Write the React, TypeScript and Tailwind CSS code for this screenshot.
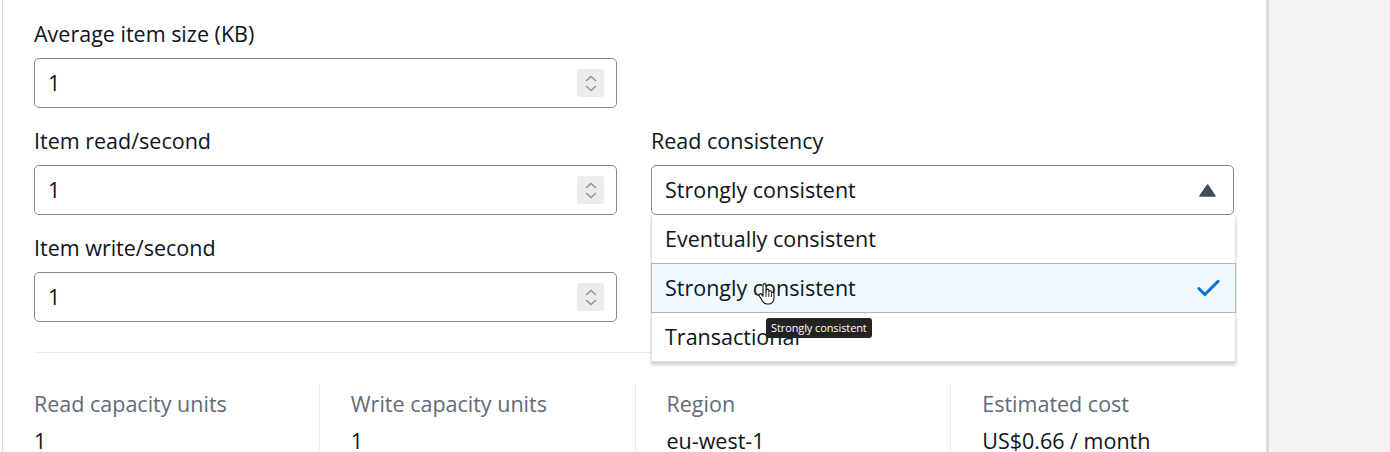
import { Check } from "lucide-react";

const font = { fontFamily: '"Open Sans", "Noto Sans", sans-serif' };

function Spinner() {
  return (
    <div className="flex h-[28px] w-[27px] flex-col items-center justify-center gap-[3px] rounded-[3px] bg-[#ececec]">
      <svg width="12" height="7" viewBox="0 0 12 7" fill="none">
        <path d="M1 6 L6 1.5 L11 6" stroke="#8d9399" strokeWidth="1.4" />
      </svg>
      <svg width="12" height="7" viewBox="0 0 12 7" fill="none">
        <path d="M1 1 L6 5.5 L11 1" stroke="#8d9399" strokeWidth="1.4" />
      </svg>
    </div>
  );
}

function NumberField({ label, value }: { label: string; value: string }) {
  return (
    <div className="flex flex-col">
      <label className="mb-[12px] text-[21.5px] leading-[24px] text-[#0f141a]">{label}</label>
      <div className="flex h-[50px] items-center justify-between rounded-[5px] border border-[#7d8998] bg-white pl-[13px] pr-[12px]">
        <span className="text-[21.5px] text-[#0f141a]">{value}</span>
        <Spinner />
      </div>
    </div>
  );
}

const options = ["Eventually consistent", "Strongly consistent", "Transactional"];

function PointerHand() {
  return (
    <svg width="18" height="22" viewBox="0 0 18 22" className="absolute left-[758px] top-[283px]">
      <path
        d="M5 2.2c0-1 .7-1.6 1.5-1.6S8 1.2 8 2.2V9l.2-1.6c.1-.8.7-1.3 1.4-1.3s1.3.6 1.3 1.4v1.2c.2-.6.7-1 1.3-1s1.3.5 1.3 1.3v1c.2-.5.7-.8 1.2-.8.7 0 1.3.6 1.3 1.4v4.5c0 3.3-2.3 5.9-5.5 5.9H9c-2 0-3.3-.9-4.4-2.6L1.3 13c-.5-.8-.3-1.7.4-2.1.7-.4 1.5-.2 2 .5L5 13.3z"
        fill="#fff"
        stroke="#111"
        strokeWidth="1.1"
        strokeLinejoin="round"
      />
      <path d="M8 9v5M10.8 9.5v4.5M13.4 10.6v3.4" stroke="#111" strokeWidth="0.9" />
    </svg>
  );
}

function ReadConsistency() {
  return (
    <div className="flex flex-col">
      <label className="mb-[12px] text-[21.5px] leading-[24px] text-[#0f141a]">Read consistency</label>
      <div className="flex h-[50px] items-center justify-between rounded-[5px] border border-[#7d8998] bg-white pl-[13px] pr-[17px]">
        <span className="text-[21.5px] text-[#0f141a]">Strongly consistent</span>
        <svg width="17" height="13" viewBox="0 0 17 13">
          <path d="M8.5 1 L16 12 L1 12 Z" fill="#414d5c" strokeLinejoin="round" stroke="#414d5c" strokeWidth="1.5" />
        </svg>
      </div>
    </div>
  );
}

function Stat({ label, value, first }: { label: string; value: string; first?: boolean }) {
  return (
    <div className={`flex flex-col gap-[13px] pl-[31px] pt-[8px] ${first ? "" : "border-l border-[#e9ebed]"}`}>
      <span className="text-[21.5px] leading-[24px] text-[#5f6b7a]">{label}</span>
      <span className="text-[21.5px] leading-[24px] text-[#0f141a]">{value}</span>
    </div>
  );
}

export default function App() {
  return (
    <div className="flex h-[452px] w-[1390px] overflow-hidden bg-[#f2f3f3]" style={font}>
      <div className="relative h-full w-[1269px] bg-white pl-[2px]">
        <div className="h-full border-l border-r-[3px] border-l-[#d5d9dc] border-r-[#d9dcdc]">
          <div className="pl-[31px] pr-[32px] pt-[22px]">
            <div className="grid grid-cols-2 gap-x-[34px] gap-y-[21px]">
              <NumberField label="Average item size (KB)" value="1" />
              <div />
              <NumberField label="Item read/second" value="1" />
              <ReadConsistency />
              <NumberField label="Item write/second" value="1" />
              <div />
            </div>
            <div className="mt-[30px] h-px bg-[#e9ebed]" />
          </div>

          <div className="mt-[31px] grid grid-cols-4">
            <Stat first label="Read capacity units" value="1" />
            <Stat label="Write capacity units" value="1" />
            <Stat label="Region" value="eu-west-1" />
            <Stat label="Estimated cost" value="US$0.66 / month" />
          </div>
        </div>

        {/* dropdown */}
        <div className="absolute left-[651px] top-[215px] w-[585px] border-x border-b border-[#dde1e4] bg-white shadow-[0_3px_3px_rgba(0,7,22,0.18)]">
          {options.map((o) => {
            const sel = o === "Strongly consistent";
            return (
              <div
                key={o}
                className={`flex h-[48px] items-center justify-between pl-[13px] pr-[12px] text-[21.5px] text-[#0f141a] ${
                  sel ? "-mx-px h-[50px] border border-[#aab6c2] bg-[#f0f9fd]" : ""
                }`}
              >
                <span>{o}</span>
                {sel && <Check className="h-[29px] w-[29px] text-[#0972d3]" strokeWidth={2.5} />}
              </div>
            );
          })}
        </div>

        {/* tooltip */}
        <div className="absolute left-[766px] top-[318px] rounded-[3px] bg-[#232323] px-[5px] py-[2px] text-[11px] leading-[16px] tracking-[-0.1px] text-white">
          Strongly consistent
        </div>
        <PointerHand />
      </div>
    </div>
  );
}
